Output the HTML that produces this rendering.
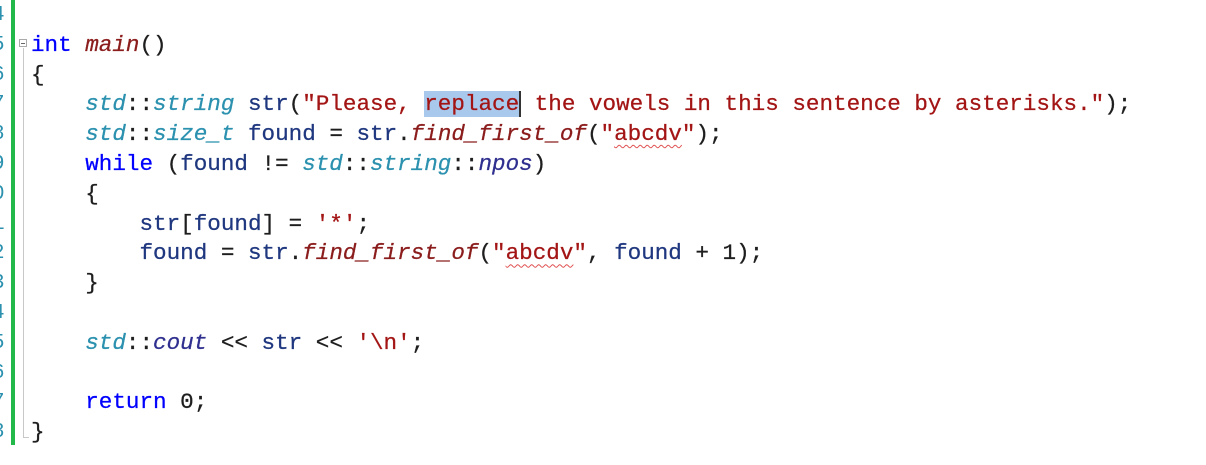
<!DOCTYPE html>
<html><head><meta charset="utf-8"><style>
html,body{margin:0;padding:0;background:#fff;width:1206px;height:465px;overflow:hidden;position:relative}
.code{position:absolute;left:31px;top:1px;font-family:"Liberation Mono",monospace;font-size:22.6px;line-height:29.8px;white-space:pre;color:#1e1e1e;-webkit-text-stroke:0.25px currentColor}
.ln{position:absolute;left:-8px;top:1px;font-family:"Liberation Mono",monospace;font-size:21px;line-height:29.8px;color:#2b91af;white-space:pre}
.k{color:#0000ff}.t{color:#2b91af;font-style:italic}.f{color:#8b1c1c;font-style:italic}
.v{color:#1f377f}.s{color:#a31515}.n{color:#2f2f8f;font-style:italic}
.sq{text-decoration:underline wavy #e05050;text-decoration-thickness:1px;text-underline-offset:4px}
.sel{background:#a8c8ec;border-right:2px solid #333}
</style></head><body>
<div class="ln">4
5
6
7
8
9
0
1
2
3
4
5
6
7
8</div>
<div style="position:absolute;left:11px;top:0;width:4px;height:445px;background:#22b84a"></div>
<div style="position:absolute;left:23px;top:48px;width:1px;height:390px;background:#c8c8c8"></div>
<div style="position:absolute;left:23px;top:437px;width:6px;height:1px;background:#c8c8c8"></div>
<div style="position:absolute;left:19px;top:39px;width:8px;height:8px;border:1px solid #aaa;box-sizing:border-box;background:#fff"><div style="position:absolute;left:1px;top:3px;width:4px;height:1px;background:#666"></div></div>
<div class="code">
<span class="k">int</span> <span class="f">main</span>()
{
    <span class="t">std</span>::<span class="t">string</span> <span class="v">str</span>(<span class="s">"Please, <span class="sel">replace</span> the vowels in this sentence by asterisks."</span>);
    <span class="t">std</span>::<span class="t">size_t</span> <span class="v">found</span> = <span class="v">str</span>.<span class="f">find_first_of</span>(<span class="s">"<span class="sq">abcdv</span>"</span>);
    <span class="k">while</span> (<span class="v">found</span> != <span class="t">std</span>::<span class="t">string</span>::<span class="n">npos</span>)
    {
        <span class="v">str</span>[<span class="v">found</span>] = <span class="s">'*'</span>;
        <span class="v">found</span> = <span class="v">str</span>.<span class="f">find_first_of</span>(<span class="s">"<span class="sq">abcdv</span>"</span>, <span class="v">found</span> + 1);
    }

    <span class="t">std</span>::<span class="n">cout</span> &lt;&lt; <span class="v">str</span> &lt;&lt; <span class="s">'\n'</span>;

    <span class="k">return</span> 0;
}</div>
</body></html>
